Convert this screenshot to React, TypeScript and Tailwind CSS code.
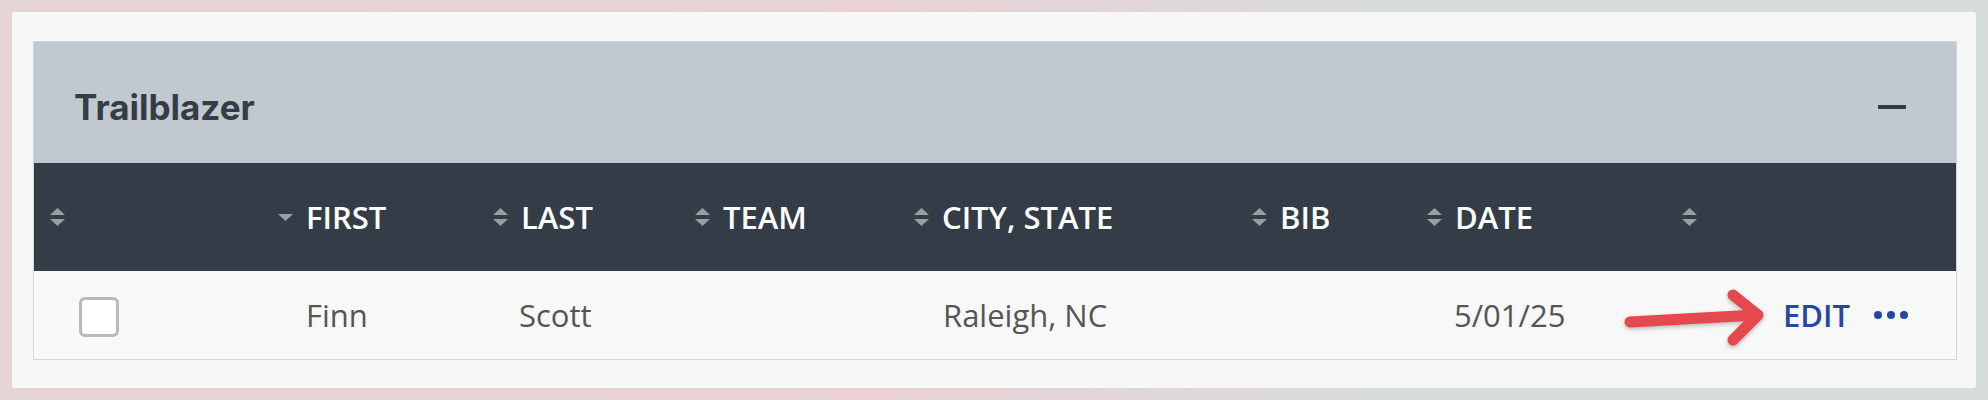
import React from "react";

const SortIcon = () => (
  <svg width="15" height="18" viewBox="0 0 15 18" className="shrink-0">
    <polygon points="7.5,0 15,7 0,7" fill="#9a9da1" />
    <polygon points="0,11 15,11 7.5,18" fill="#9a9da1" />
  </svg>
);

const DownIcon = () => (
  <svg width="15" height="7" viewBox="0 0 15 7" className="shrink-0">
    <polygon points="0,0 15,0 7.5,7" fill="#9a9da1" />
  </svg>
);

const columns = [
  { label: "", icon: "sort" },
  { label: "FIRST", icon: "down" },
  { label: "LAST", icon: "sort" },
  { label: "TEAM", icon: "sort" },
  { label: "CITY, STATE", icon: "sort" },
  { label: "BIB", icon: "sort" },
  { label: "DATE", icon: "sort" },
  { label: "", icon: "sort" },
];

const gridCols =
  "grid grid-cols-[228px_215px_202px_219px_338px_175px_255px_290px]";

const App = () => {
  return (
    <div className="w-[1988px] h-[400px] p-3 bg-linear-to-r from-[#e5d4d5] via-[#e9d1d4] via-45% to-[#d7dcdd] to-70% font-['Open_Sans',sans-serif]">
      <div className="w-[1964px] h-[376px] bg-[#f7f7f7] rounded-[3px] pl-[21px] pr-[19px] pt-[29px]">
        <div className="border border-[#d3d5d8] bg-[#f8f8f8]">
          {/* panel title */}
          <div className="h-[121px] bg-[#c2c8cf] flex items-center justify-between pl-10 pr-[50px] pt-[9px]">
            <h1 className="font-['Inter',sans-serif] font-bold text-[35px] leading-none text-[#343d47]">
              Trailblazer
            </h1>
            <div className="w-[28px] h-1 bg-[#343d47]" />
          </div>

          {/* column headers */}
          <div className={`${gridCols} h-[108px] bg-[#343d47]`}>
            {columns.map((col, i) => (
              <div
                key={i}
                className="flex items-center gap-[13px] pl-4 text-white font-semibold text-[31px] leading-none"
              >
                {col.icon === "down" ? <DownIcon /> : <SortIcon />}
                {col.label && <span>{col.label}</span>}
              </div>
            ))}
          </div>

          {/* row */}
          <div
            className={`${gridCols} relative h-[88px] text-[31px] leading-none text-[#555]`}
          >
            <div className="flex items-center pl-[45px] pt-1">
              <div className="w-10 h-10 rounded-md border-[3px] border-[#b9b9b9] bg-white" />
            </div>
            <div className="flex items-center pl-[44px]">Finn</div>
            <div className="flex items-center pl-[42px]">Scott</div>
            <div className="flex items-center pl-[44px]"></div>
            <div className="flex items-center pl-[45px]">Raleigh, NC</div>
            <div className="flex items-center pl-[44px]"></div>
            <div className="flex items-center pl-[43px]">5/01/25</div>
            <div className="flex items-center justify-end gap-6 pr-12">
              <span className="text-[#2347a5] font-semibold">EDIT</span>
              <div className="flex gap-[5px]">
                <span className="w-[8px] h-[8px] rounded-full bg-[#2347a5]" />
                <span className="w-[8px] h-[8px] rounded-full bg-[#2347a5]" />
                <span className="w-[8px] h-[8px] rounded-full bg-[#2347a5]" />
              </div>
            </div>

            {/* annotation arrow */}
            <svg
              width="150"
              height="65"
              viewBox="0 0 150 65"
              className="absolute left-[1588px] top-[14px] drop-shadow-[0_2px_2px_rgba(0,0,0,0.25)]"
            >
              <g
                stroke="#e5484d"
                strokeWidth="11"
                strokeLinecap="round"
                strokeLinejoin="round"
                fill="none"
              >
                <line x1="8" y1="37" x2="134" y2="30" />
                <polyline points="111,10 136,30 111,55" />
              </g>
            </svg>
          </div>
        </div>
      </div>
    </div>
  );
};

export default App;
